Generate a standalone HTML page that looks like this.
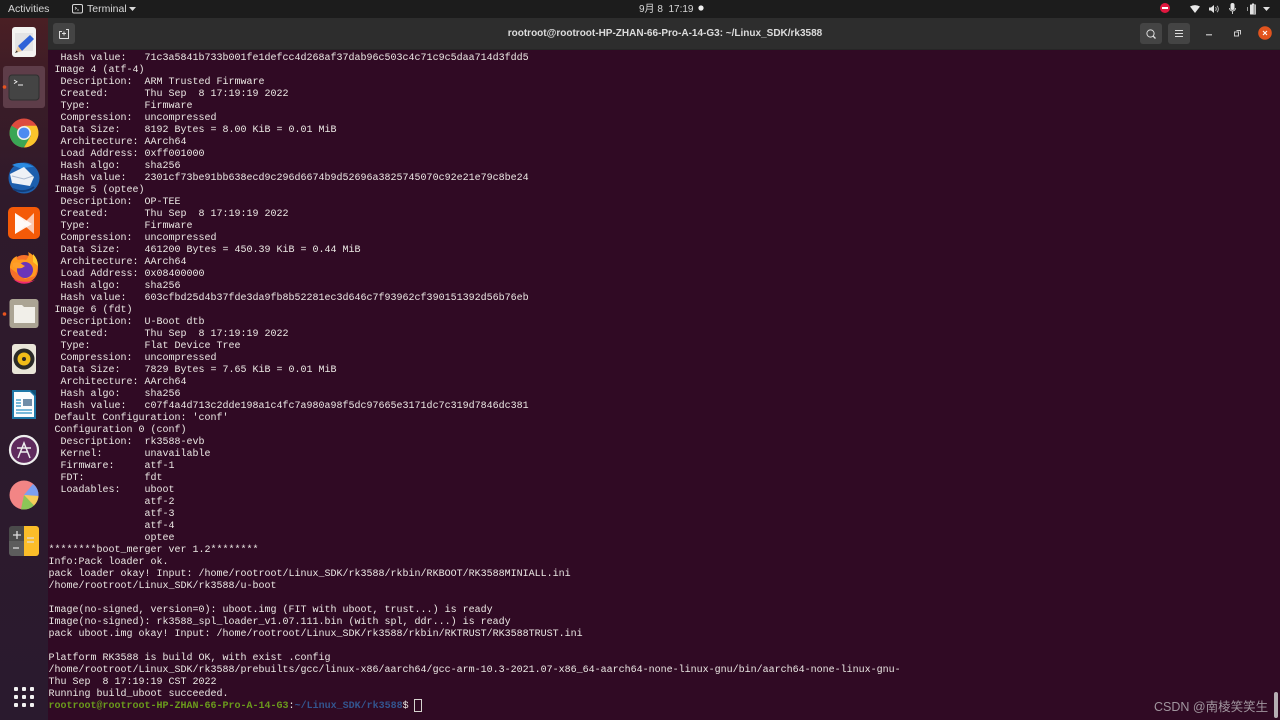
<!DOCTYPE html>
<html><head><meta charset="utf-8"><style>
html,body{margin:0;padding:0;width:1280px;height:720px;overflow:hidden;background:#300a24}
#top{position:absolute;left:0;top:0;width:1280px;height:18px;background:#1c1c1c;color:#d8d8d8;font:10.500px "Liberation Sans","Noto Sans CJK SC",sans-serif;line-height:19px}
#top span{position:absolute;top:0;white-space:nowrap}
#dock{position:absolute;left:0;top:18px;width:48px;height:702px;background:linear-gradient(180deg,#4a1f24 0,#3b1c27 70px,#2f1a2b 180px,#2a1a2e 100%)}
#title{position:absolute;left:48px;top:18px;width:1232px;height:32px;background:#2d2d2d;border-bottom:1px solid #262626;box-sizing:border-box}
#t{position:absolute;left:0;top:0;width:100%;text-align:center;color:#dcdcdc;font:bold 10px/30px "Liberation Sans",sans-serif;top:1px;left:1px}
.b{position:absolute;top:5px;width:22px;height:21px;background:#444;border-radius:3px}
pre{position:absolute;left:48.500px;top:53px;margin:0;font:10px/12px "Liberation Mono",monospace;color:#ebe8e4;white-space:pre}
.g{color:#6a9a1c;font-weight:bold}.u{color:#33558f;font-weight:bold}
#cur{position:absolute;left:414px;top:699px;width:6px;height:11px;border:1px solid #d6d3cf}
#wm{position:absolute;left:1154px;top:699px;color:#a0959e;font:12.500px/16px "Liberation Sans","Noto Sans CJK SC",sans-serif;white-space:nowrap}
#sb{position:absolute;left:1274px;top:692px;width:4px;height:26px;background:#b5aeb3;border-radius:2px}
svg{position:absolute;overflow:visible}
</style></head><body>
<pre>  Hash value:   71c3a5841b733b001fe1defcc4d268af37dab96c503c4c71c9c5daa714d3fdd5
 Image 4 (atf-4)
  Description:  ARM Trusted Firmware
  Created:      Thu Sep  8 17:19:19 2022
  Type:         Firmware
  Compression:  uncompressed
  Data Size:    8192 Bytes = 8.00 KiB = 0.01 MiB
  Architecture: AArch64
  Load Address: 0xff001000
  Hash algo:    sha256
  Hash value:   2301cf73be91bb638ecd9c296d6674b9d52696a3825745070c92e21e79c8be24
 Image 5 (optee)
  Description:  OP-TEE
  Created:      Thu Sep  8 17:19:19 2022
  Type:         Firmware
  Compression:  uncompressed
  Data Size:    461200 Bytes = 450.39 KiB = 0.44 MiB
  Architecture: AArch64
  Load Address: 0x08400000
  Hash algo:    sha256
  Hash value:   603cfbd25d4b37fde3da9fb8b52281ec3d646c7f93962cf390151392d56b76eb
 Image 6 (fdt)
  Description:  U-Boot dtb
  Created:      Thu Sep  8 17:19:19 2022
  Type:         Flat Device Tree
  Compression:  uncompressed
  Data Size:    7829 Bytes = 7.65 KiB = 0.01 MiB
  Architecture: AArch64
  Hash algo:    sha256
  Hash value:   c07f4a4d713c2dde198a1c4fc7a980a98f5dc97665e3171dc7c319d7846dc381
 Default Configuration: 'conf'
 Configuration 0 (conf)
  Description:  rk3588-evb
  Kernel:       unavailable
  Firmware:     atf-1
  FDT:          fdt
  Loadables:    uboot
                atf-2
                atf-3
                atf-4
                optee
********boot_merger ver 1.2********
Info:Pack loader ok.
pack loader okay! Input: /home/rootroot/Linux_SDK/rk3588/rkbin/RKBOOT/RK3588MINIALL.ini
/home/rootroot/Linux_SDK/rk3588/u-boot

Image(no-signed, version=0): uboot.img (FIT with uboot, trust...) is ready
Image(no-signed): rk3588_spl_loader_v1.07.111.bin (with spl, ddr...) is ready
pack uboot.img okay! Input: /home/rootroot/Linux_SDK/rk3588/rkbin/RKTRUST/RK3588TRUST.ini

Platform RK3588 is build OK, with exist .config
/home/rootroot/Linux_SDK/rk3588/prebuilts/gcc/linux-x86/aarch64/gcc-arm-10.3-2021.07-x86_64-aarch64-none-linux-gnu/bin/aarch64-none-linux-gnu-
Thu Sep  8 17:19:19 CST 2022
Running build_uboot succeeded.
<span class="g">rootroot@rootroot-HP-ZHAN-66-Pro-A-14-G3</span>:<span class="u">~/Linux_SDK/rk3588</span>$ </pre>
<div id="cur"></div>
<div id="wm">CSDN @南棱笑笑生</div>
<div id="sb"></div>

<div id="top">
<span style="left:8px">Activities</span>
<svg style="left:72px;top:4px" width="12" height="10" viewBox="0 0 12 10"><rect x=".5" y=".5" width="10" height="8.500" rx="1.500" fill="none" stroke="#d8d8d8"/><path d="M3 3l1.500 1.200L3 5.400M5 6h2" stroke="#d8d8d8" fill="none" stroke-width=".8"/></svg>
<span style="left:87px">Terminal</span>
<svg style="left:129px;top:7px" width="7" height="4"><path d="M0 0h7L3.500 4z" fill="#d8d8d8"/></svg>
<span style="left:639px;font-size:10px">9月 8&nbsp; 17:19</span>
<svg style="left:698px;top:5px" width="6" height="6"><circle cx="3" cy="3" r="2.600" fill="#eee"/></svg>
<svg style="left:1160px;top:3px" width="10" height="10"><circle cx="5" cy="5" r="5" fill="#e0173f"/><rect x="2" y="4" width="6" height="2" fill="#fff"/></svg>
<svg style="left:1190px;top:5px" width="10" height="8" viewBox="0 0 10 8"><path d="M0 1.500Q5-1.200 10 1.500L5 8z" fill="#e8e8e8"/></svg>
<svg style="left:1209px;top:4px" width="11" height="10" viewBox="0 0 11 10"><path d="M0 3.500h2L5 1v8L2 6.500H0z" fill="#e4e4e4"/><path d="M6.500 3.200a2.500 2.500 0 010 3.600M8 1.800a4.500 4.500 0 010 6.400" fill="none" stroke="#bbb"/></svg>
<svg style="left:1229px;top:3px" width="7" height="12" viewBox="0 0 7 12"><rect x="1.500" y="0" width="4" height="7" rx="2" fill="#e8e8e8"/><path d="M.5 5a3 3 0 006 0M3.500 8v3" stroke="#ccc" fill="none"/></svg>
<svg style="left:1246px;top:3px" width="12" height="12" viewBox="0 0 12 12"><rect x="4" y="1.500" width="6" height="10" fill="#e0e0e0" rx=".5"/><rect x="6" y="0.500" width="2" height="1" fill="#e0e0e0"/><rect x="7.500" y="2" width="2" height="9" fill="#999"/><path d="M1.500 4v4" stroke="#999"/></svg>
<svg style="left:1263px;top:7px" width="7" height="4"><path d="M0 0h7L3.500 4z" fill="#e0e0e0"/></svg>
</div>

<div id="title">
<div id="t">rootroot@rootroot-HP-ZHAN-66-Pro-A-14-G3: ~/Linux_SDK/rk3588</div>
<div class="b" style="left:5px"></div>
<svg style="left:11px;top:11px" width="10" height="10" viewBox="0 0 10 10"><path d="M.5 9.500V2.500h2.500M7 .5h2.500v9H.5" fill="none" stroke="#ddd"/><path d="M5 2.500v4M3 4.500h4" stroke="#ddd"/></svg>
<div class="b" style="left:1092px"></div>
<svg style="left:1098px;top:11px" width="10" height="10" viewBox="0 0 10 10"><circle cx="4.500" cy="4.500" r="3.600" fill="none" stroke="#ddd"/><path d="M7 7l2.500 2.500" stroke="#ddd" stroke-width="1.300"/></svg>
<div class="b" style="left:1120px"></div>
<svg style="left:1127px;top:12px" width="8" height="7"><path d="M0 .5h8M0 3.500h8M0 6.500h8" stroke="#ddd"/></svg>
<svg style="left:1158px;top:16px" width="6" height="2"><rect width="6" height="1.500" fill="#aaa"/></svg>
<svg style="left:1186px;top:12px" width="7" height="7" viewBox="0 0 7 7"><rect x=".5" y="2" width="4" height="4" fill="none" stroke="#ccc"/><path d="M2.500 .5h4v4" fill="none" stroke="#ccc"/></svg>
<svg style="left:1210px;top:8px" width="14" height="14" viewBox="0 0 14 14"><circle cx="7" cy="7" r="6.800" fill="#e2541e"/><path d="M5 5l4 4M9 5l-4 4" stroke="#fff" stroke-width="1.100"/></svg>
</div>

<div id="dock">
<div style="position:absolute;left:3px;top:48px;width:42px;height:42px;background:#5e3d49;border-radius:3px"></div>
</div>
<svg style="left:0;top:0" width="48" height="720" viewBox="0 0 48 720">
<!-- text editor -->
<rect x="12" y="27" width="24" height="30" rx="3" fill="#f3f3f1"/>
<rect x="15" y="33" width="18" height="18" fill="#e4e4e4"/>
<path d="M18 46l12-11 4 4-12 12z" fill="#2f62d8"/>
<path d="M18 46l4 5-7 2z" fill="#e9c9a0"/>
<path d="M15 53l1.500-2.500 1.500 1.500z" fill="#333"/>
<!-- terminal -->
<circle cx="4.500" cy="87" r="1.800" fill="#e9541f"/>
<rect x="9" y="75" width="30" height="25" rx="3" fill="#444" stroke="#2e2e2e"/>
<path d="M14 80l3 1.800-3 1.800" fill="none" stroke="#eee" stroke-width=".9"/>
<path d="M18 85h5" stroke="#eee"/>
<!-- chrome -->
<circle cx="24" cy="133" r="14.500" fill="#dd4b3e"/>
<path d="M24 133L11.500 125.700A14.500 14.500 0 0 0 24 147.500l7-12z" fill="#3aa655"/>
<path d="M24 133l7 2.500-7 12A14.500 14.500 0 0 0 36.500 125.700H24z" fill="#fbc52c"/>
<circle cx="24" cy="133" r="7" fill="#eee"/><circle cx="24" cy="133" r="5.400" fill="#4c8bf0"/>
<!-- thunderbird -->
<circle cx="24" cy="178" r="15.500" fill="#1d5fae"/>
<path d="M12 165q10-5 22 2-8 0-12 2z" fill="#2b8ae0"/>
<path d="M10 174l14-7 10 10-4 9-18-3z" fill="#eef1f6"/>
<path d="M12 176l12 3 9-3" fill="none" stroke="#aebcd2"/>
<path d="M13 189q12 5 21-2" fill="none" stroke="#123f7d" stroke-width="2"/>
<!-- orange app -->
<rect x="8" y="207" width="32" height="32" rx="5" fill="#f45a08"/>
<path d="M15 213l10 9 9-9v21l-9-8-10 8z" fill="#fbc8b2"/>
<path d="M15 213l17 11-17 10z" fill="#fff" opacity=".9"/>
<!-- firefox -->
<circle cx="24" cy="269" r="14" fill="#f5702a"/>
<path d="M10 268q0-9 7-12-1 3 1 4 4-1 8 0 4-4 2-8 10 5 10 15l-3 9-10 3z" fill="#ff9a1f"/>
<path d="M33 254q5 5 5 12l-5-4z" fill="#ffcb2d"/>
<circle cx="25" cy="270" r="8" fill="#6a34b8"/>
<path d="M13 263q6-2 10 2l2 1-3 2q-5 1-9-1z" fill="#ff9f2a"/>
<path d="M13 279q10 9 22 1-10 4-22-1z" fill="#f02a70"/>
<!-- files -->
<circle cx="4.500" cy="314" r="1.800" fill="#e9541f"/>
<rect x="9.500" y="299" width="29" height="29" rx="3" fill="#aba494"/>
<path d="M14 305h8l2 2h11v16H14z" fill="#f1efe9"/>
<!-- rhythmbox -->
<rect x="12" y="344" width="24" height="30" rx="3" fill="#e9e5d8"/>
<circle cx="24" cy="359" r="10.500" fill="#2b2a28"/>
<circle cx="24" cy="359" r="6.500" fill="#f0bd18"/>
<circle cx="24" cy="359" r="2" fill="#2b2a28"/>
<!-- writer -->
<path d="M12 390h19l5 5v24H12z" fill="#1f78a8"/>
<path d="M14 392h16l4 4v21H14z" fill="#fbfcfd"/>
<path d="M30 390h6v6z" fill="#0f4f75"/>
<rect x="23" y="399" width="9" height="7" fill="#6f8da8"/>
<path d="M16 400h5M16 403h5M16 406h5M16 410h16M16 413h16" stroke="#2b8fc4" stroke-width="1.300"/>
<!-- software -->
<circle cx="24" cy="450" r="14" fill="#5f2a5d" stroke="#eee" stroke-width="2.200"/>
<path d="M18 458l6-15 6 15M20.500 452h7M17 448h14" fill="none" stroke="#eee" stroke-width="1.500"/>
<!-- disk usage pie -->
<circle cx="24" cy="495" r="14.500" fill="#f28585"/>
<path d="M24 495L33 484A14.500 14.500 0 0 1 38.500 496z" fill="#7b9ff0"/>
<path d="M24 495l14.500 1A14.500 14.500 0 0 1 34 505.500z" fill="#f6cd5a"/>
<path d="M24 495l10 10.500A14.500 14.500 0 0 1 21 509.200z" fill="#8cc657"/>
<!-- calc -->
<path d="M12 526h12v15H9v-12a3 3 0 013-3z" fill="#4a4a4a"/>
<path d="M9 541h15v15H12a3 3 0 01-3-3z" fill="#5c5c5c"/>
<path d="M24 526h12a3 3 0 013 3v24a3 3 0 01-3 3H24z" fill="#fbbd29"/>
<path d="M13 535h8M17 531v8M13 548h6M27 538h7M27 542h7" stroke="#ddd" stroke-width="1.300"/>
<!-- grid -->
<g fill="#f2f2f2"><rect x="14" y="687" width="4" height="4" rx="1"/><rect x="22" y="687" width="4" height="4" rx="1"/><rect x="30" y="687" width="4" height="4" rx="1"/><rect x="14" y="695" width="4" height="4" rx="1"/><rect x="22" y="695" width="4" height="4" rx="1"/><rect x="30" y="695" width="4" height="4" rx="1"/><rect x="14" y="703" width="4" height="4" rx="1"/><rect x="22" y="703" width="4" height="4" rx="1"/><rect x="30" y="703" width="4" height="4" rx="1"/></g>
</svg>
</body></html>
